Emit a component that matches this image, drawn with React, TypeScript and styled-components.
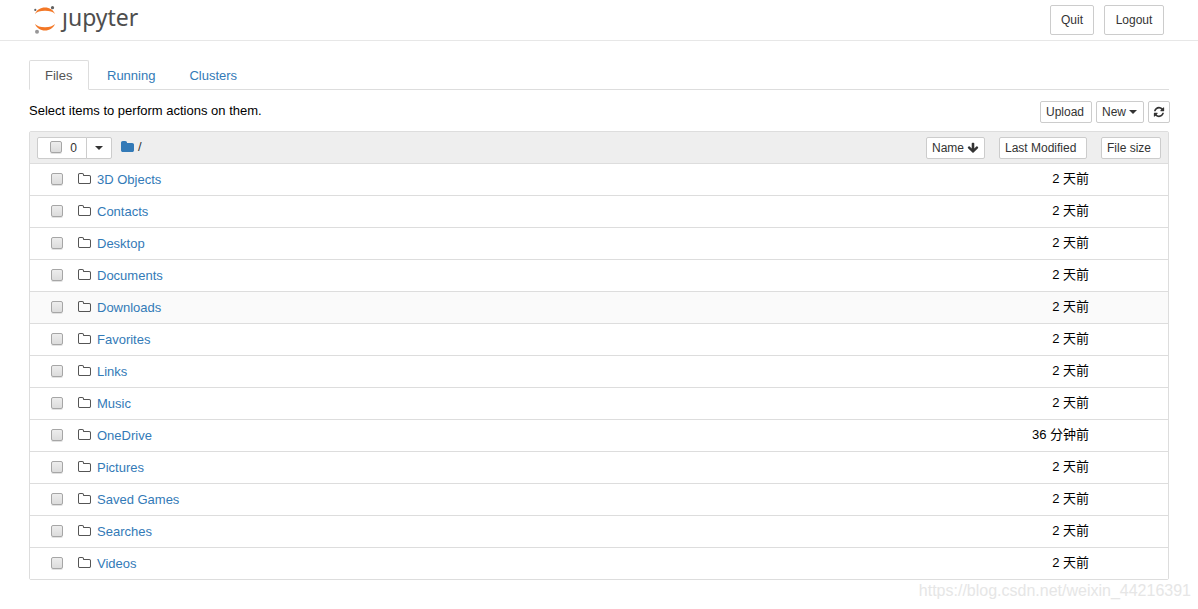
import React from "react";
import styled, { createGlobalStyle, css } from "styled-components";

const GlobalStyle = createGlobalStyle`
  * { box-sizing: border-box; }
  html, body { margin: 0; }
  body {
    background: #fff;
    color: #000;
    font: 13px/20px "Liberation Sans", "Noto Sans CJK SC", sans-serif;
  }
  button, input { font-family: inherit; margin: 0; }
  a { text-decoration: none; }
  svg { flex: none; }
`;

const Page = styled.div`
  position: relative;
  padding-bottom: 29px;
`;

const Header = styled.header`
  display: flex;
  align-items: flex-start;
  justify-content: space-between;
  height: 41px;
  padding: 5px 34px 0;
  border-bottom: 1px solid #e7e7e7;
`;

const Logo = styled.a`
  display: flex;
  align-items: flex-start;
  gap: 6px;
  color: #4e4e4e;
  font: 23px/24px "Noto Sans", sans-serif;

  svg { display: block; }
`;

const HeaderButtons = styled.div`
  display: flex;
  gap: 10px;
`;

const buttonLook = css`
  display: inline-flex;
  align-items: center;
  justify-content: center;
  background: #fff;
  border: 1px solid #ccc;
  border-radius: 2px;
  color: #333;
  font-size: 12px;
  white-space: nowrap;
  cursor: pointer;
`;

const HeaderButton = styled.button<{ $width: number }>`
  ${buttonLook}
  width: ${(p) => p.$width}px;
  height: 30px;
  padding: 0;
`;

const SmallButton = styled.button<{ $width: number }>`
  ${buttonLook}
  justify-content: flex-start;
  width: ${(p) => p.$width}px;
  height: 22px;
  padding: 0 5px;
  gap: 3px;
`;

const IconButton = styled.button`
  ${buttonLook}
  width: 22px;
  height: 22px;
  padding: 0;
`;

const Main = styled.main`
  padding: 19px 29px 0;
`;

const Tabs = styled.nav`
  display: flex;
  gap: 2px;
  border-bottom: 1px solid #ddd;
`;

const Tab = styled.a<{ $active?: boolean }>`
  min-width: 60px;
  height: 30px;
  padding: 5px 15px;
  margin-bottom: -1px;
  border: 1px solid transparent;
  border-radius: 2px 2px 0 0;
  color: #337ab7;
  ${(p) =>
    p.$active &&
    css`
      color: #555;
      background: #fff;
      border-color: #ddd #ddd #fff;
    `}
`;

const Toolbar = styled.div`
  display: flex;
  justify-content: space-between;
  margin: 11px -1px 8px 0;
`;

const ToolbarButtons = styled.div`
  display: flex;
  gap: 4px;
`;

const List = styled.section`
  border: 1px solid #ddd;
  border-radius: 2px;
`;

const ListHeader = styled.div`
  display: flex;
  align-items: center;
  height: 31px;
  padding: 0 7px;
  background: #eee;
`;

const SelectGroup = styled.div`
  display: flex;
  margin-right: 9px;
`;

const SelectAll = styled.label`
  ${buttonLook}
  width: 50px;
  height: 22px;
  padding-left: 3px;
  gap: 8px;
  border-radius: 2px 0 0 2px;

  input { margin-bottom: 2px; }
`;

const SelectMenu = styled.button`
  ${buttonLook}
  width: 26px;
  height: 22px;
  margin-left: -1px;
  border-radius: 0 2px 2px 0;
`;

const Check = styled.input.attrs({ type: "checkbox" })`
  appearance: none;
  flex: none;
  width: 12px;
  height: 12px;
  border: 1px solid #a6a6a6;
  border-radius: 2px;
  background: linear-gradient(#ededed, #dcdcdc);
  box-shadow: 0 1px 0 #e2e2e2;

  &:checked { background: #337ab7; }
`;

const Breadcrumb = styled.div`
  display: flex;
  flex: 1;
  gap: 3px;
  padding-bottom: 2px;
  color: #333;

  a { display: flex; color: #337ab7; align-items: center; }
`;

const SortButtons = styled.div`
  display: flex;
  gap: 14px;
`;

const Row = styled.div<{ $hover?: boolean }>`
  display: flex;
  align-items: center;
  height: 32px;
  padding: 0 79px 1px 21px;
  border-top: 1px solid #ddd;
  background: ${(p) => (p.$hover ? "#fafafa" : "#fff")};
`;

const ItemLink = styled.a`
  display: flex;
  flex: 1;
  align-items: center;
  gap: 5px;
  margin-left: 15px;
  padding-top: 2px;
  color: #337ab7;

  svg {
    margin-bottom: 2px;
    color: #555;
  }
`;

const Modified = styled.span`
  line-height: 20px;
`;

const Watermark = styled.div`
  position: absolute;
  right: 7px;
  bottom: 8px;
  color: #e6e6e6;
  font: 16px/20px "Liberation Sans", sans-serif;
`;

const FOLDER =
  "M1728 608v704q0 92-66 158t-158 66h-1216q-92 0-158-66t-66-158v-960q0-92 66-158t158-66h320q92 0 158 66t66 158v32h672q92 0 158 66t66 158z";
const FOLDER_OPEN =
  "M1600 1312v-704q0-40-28-68t-68-28h-704q-40 0-68-28t-28-68v-64q0-40-28-68t-68-28h-320q-40 0-68 28t-28 68v960q0 40 28 68t68 28h1216q40 0 68-28t28-68zm128-704v704q0 92-66 158t-158 66h-1216q-92 0-158-66t-66-158v-960q0-92 66-158t158-66h320q92 0 158 66t66 158v32h672q92 0 158 66t66 158z";
const REFRESH =
  "M1639 1056q0 5-1 7-64 268-268 434.5t-478 166.5q-146 0-282.5-55t-243.5-157l-129 129q-19 19-45 19t-45-19-19-45v-448q0-26 19-45t45-19h448q26 0 45 19t19 45-19 45l-137 137q71 66 161 102t187 36q134 0 250-65t186-179q11-17 53-117 8-23 30-23h192q13 0 22.5 9.5t9.5 22.5zm25-800v448q0 26-19 45t-45 19h-448q-26 0-45-19t-19-45 19-45l138-138q-148-137-349-137-134 0-250 65t-186 179q-11 17-53 117-8 23-30 23h-199q-13 0-22.5-9.5t-9.5-22.5v-7q65-268 270-434.5t480-166.5q146 0 284 55.5t245 156.5l130-129q19-19 45-19t45 19 19 45z";
const ARROW_DOWN =
  "M1675 832q0 53-37 90l-651 652q-39 37-91 37-53 0-90-37l-651-652q-38-36-38-90 0-53 38-91l74-75q39-37 91-37 53 0 90 37l294 294v-704q0-52 38-90t90-38h128q52 0 90 38t38 90v704l294-294q37-37 90-37 52 0 91 37l75 75q37 39 37 91z";

const Icon = ({ d, size = 12 }: { d: string; size?: number }) => (
  <svg width={size} height={size} viewBox="0 0 1792 1792" fill="currentColor" aria-hidden="true">
    <path d={d} />
  </svg>
);

const FolderIcon = ({ d }: { d: string }) => (
  <svg width="14" height="14" viewBox="64 0 1792 1792" fill="currentColor" aria-hidden="true">
    <path d={d} />
  </svg>
);

const Caret = () => (
  <svg width="8" height="4" viewBox="0 0 8 4" fill="currentColor" aria-hidden="true">
    <path d="M0 0h8L4 4z" />
  </svg>
);

const JupyterMark = () => (
  <svg width="22" height="29" viewBox="0 0 22 29" aria-hidden="true">
    <path d="M1 9C2.600 5 6.500 2.600 11 2.600s8.400 2.400 10 6.400C19.200 7 15.500 5.800 11 5.800S2.800 7 1 9z" fill="#f37726" />
    <path d="M1 19C2.600 23 6.500 25.500 11 25.500s8.400-2.500 10-6.500c-1.800 2-5.500 3.300-10 3.300S2.800 21 1 19z" fill="#f37726" />
    <circle cx="18.500" cy="2.700" r="1.600" fill="#616262" />
    <circle cx="1.300" cy="4.900" r="1.100" fill="#616262" />
    <circle cx="3" cy="26.700" r="2" fill="#989798" />
  </svg>
);

const items: { name: string; modified: string; hover?: boolean }[] = [
  { name: "3D Objects", modified: "2 天前" },
  { name: "Contacts", modified: "2 天前" },
  { name: "Desktop", modified: "2 天前" },
  { name: "Documents", modified: "2 天前" },
  { name: "Downloads", modified: "2 天前", hover: true },
  { name: "Favorites", modified: "2 天前" },
  { name: "Links", modified: "2 天前" },
  { name: "Music", modified: "2 天前" },
  { name: "OneDrive", modified: "36 分钟前" },
  { name: "Pictures", modified: "2 天前" },
  { name: "Saved Games", modified: "2 天前" },
  { name: "Searches", modified: "2 天前" },
  { name: "Videos", modified: "2 天前" },
];

export default function App() {
  return (
    <Page>
      <GlobalStyle />
      <Header>
        <Logo href="#" aria-label="jupyter">
          <JupyterMark />
          <span>ȷupyter</span>
        </Logo>
        <HeaderButtons>
          <HeaderButton $width={44}>Quit</HeaderButton>
          <HeaderButton $width={60}>Logout</HeaderButton>
        </HeaderButtons>
      </Header>
      <Main>
        <Tabs>
          <Tab href="#files" $active>Files</Tab>
          <Tab href="#running">Running</Tab>
          <Tab href="#clusters">Clusters</Tab>
        </Tabs>
        <Toolbar>
          <span>Select items to perform actions on them.</span>
          <ToolbarButtons>
            <SmallButton $width={52}>Upload</SmallButton>
            <SmallButton $width={48}>New <Caret /></SmallButton>
            <IconButton aria-label="Refresh"><Icon d={REFRESH} /></IconButton>
          </ToolbarButtons>
        </Toolbar>
        <List>
          <ListHeader>
            <SelectGroup>
              <SelectAll><Check />0</SelectAll>
              <SelectMenu aria-label="Select by type"><Caret /></SelectMenu>
            </SelectGroup>
            <Breadcrumb>
              <a href="#root" aria-label="Home"><FolderIcon d={FOLDER} /></a>
              <span>/</span>
            </Breadcrumb>
            <SortButtons>
              <SmallButton $width={59}>Name <Icon d={ARROW_DOWN} /></SmallButton>
              <SmallButton $width={88}>Last Modified</SmallButton>
              <SmallButton $width={60}>File size</SmallButton>
            </SortButtons>
          </ListHeader>
          {items.map((item) => (
            <Row key={item.name} $hover={item.hover}>
              <Check aria-label={item.name} />
              <ItemLink href={"#" + item.name}>
                <FolderIcon d={FOLDER_OPEN} />
                {item.name}
              </ItemLink>
              <Modified>{item.modified}</Modified>
            </Row>
          ))}
        </List>
      </Main>
      <Watermark>https://blog.csdn.net/weixin_44216391</Watermark>
    </Page>
  );
}
